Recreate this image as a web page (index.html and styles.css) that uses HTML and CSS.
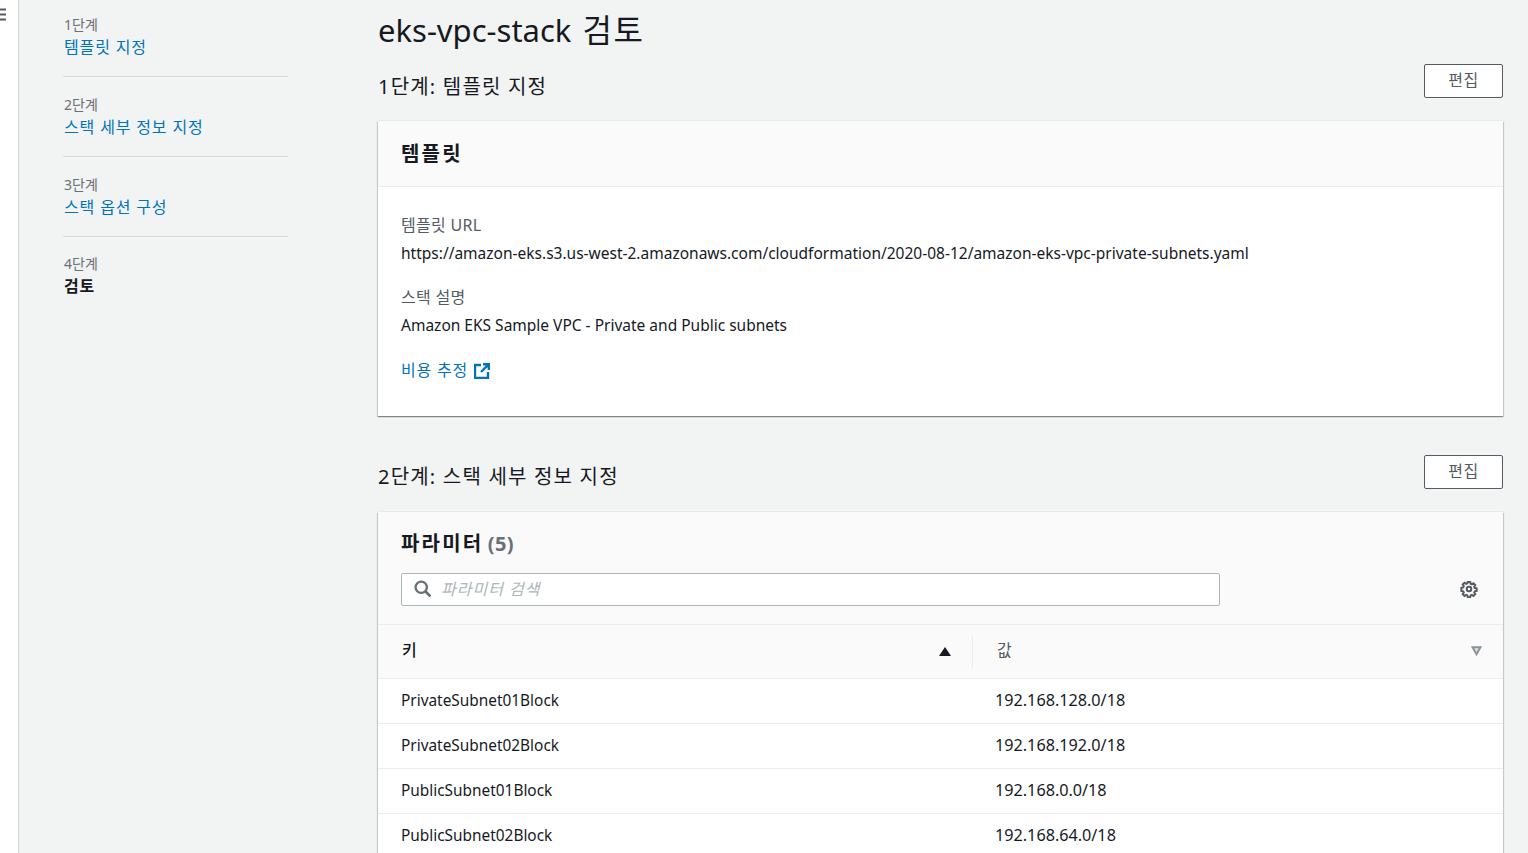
FILE: index.html
```html
<!DOCTYPE html>
<html lang="ko">
<head>
<meta charset="utf-8">
<title>eks-vpc-stack 검토</title>
<link rel="stylesheet" href="styles.css">
</head>
<body>
<div class="app">
  <aside class="strip">
    <svg class="menu-icon" width="6" height="14" viewBox="0 0 6 14"><path d="M0 1.5h6M0 6.5h6M0 11.5h6" stroke="#545b64" stroke-width="2" fill="none"/></svg>
  </aside>
  <nav class="steps">
    <div class="step">
      <div class="step-num">1단계</div>
      <a class="step-link">템플릿 지정</a>
    </div>
    <div class="step">
      <div class="step-num">2단계</div>
      <a class="step-link">스택 세부 정보 지정</a>
    </div>
    <div class="step">
      <div class="step-num">3단계</div>
      <a class="step-link">스택 옵션 구성</a>
    </div>
    <div class="step step-last">
      <div class="step-num">4단계</div>
      <span class="step-current">검토</span>
    </div>
  </nav>
  <main class="content">
    <h1 class="page-title">eks-vpc-stack <span class="title-ko">검토</span></h1>
    <section class="section section-first">
      <div class="section-head">
        <h2 class="section-title">1단계: 템플릿 지정</h2>
        <button class="btn">편집</button>
      </div>
      <div class="card">
        <div class="card-head"><h3 class="card-title">템플릿</h3></div>
        <div class="card-body">
          <div class="field">
            <div class="field-label">템플릿 URL</div>
            <div class="field-value">https://amazon-eks.s3.us-west-2.amazonaws.com/cloudformation/2020-08-12/amazon-eks-vpc-private-subnets.yaml</div>
          </div>
          <div class="field">
            <div class="field-label">스택 설명</div>
            <div class="field-value">Amazon EKS Sample VPC - Private and Public subnets</div>
          </div>
          <a class="ext-link">비용 추정
            <svg class="ext-icon" width="16" height="16" viewBox="0 0 16 16"><path d="M7 2H1v13h13V9" fill="none" stroke="#0073bb" stroke-width="2.4"/><path d="M9 1.2h5.8V7M14.8 1.2L7 9" fill="none" stroke="#0073bb" stroke-width="2.4"/></svg>
          </a>
        </div>
      </div>
    </section>
    <section class="section">
      <div class="section-head">
        <h2 class="section-title">2단계: 스택 세부 정보 지정</h2>
        <button class="btn">편집</button>
      </div>
      <div class="card card-open">
        <div class="card-head card-head-params">
          <h3 class="card-title card-title-params">파라미터 <span class="count">(5)</span></h3>
          <div class="tools">
            <div class="search">
              <svg class="search-icon" width="17" height="17" viewBox="0 0 16 16"><circle cx="6.8" cy="6.8" r="5.3" fill="none" stroke="#687078" stroke-width="2.2"/><path d="M10.6 10.6L15.5 15.5" stroke="#687078" stroke-width="2.6"/></svg>
              <span class="placeholder">파라미터 검색</span>
            </div>
            <svg class="gear" width="18" height="18" viewBox="0 0 18 18"><path d="M7.6 1.2h2.8l.4 2.1 1.4.6 1.8-1.2 2 2-1.2 1.8.6 1.4 2.1.4v2.8l-2.1.4-.6 1.4 1.2 1.8-2 2-1.8-1.2-1.4.6-.4 2.1H7.6l-.4-2.1-1.4-.6-1.8 1.2-2-2 1.2-1.8-.6-1.4-2.1-.4V7.6l2.1-.4.6-1.4-1.2-1.8 2-2 1.8 1.2 1.4-.6z" transform="translate(.9 .9) scale(.9)" fill="none" stroke="#545b64" stroke-width="2.2"/><circle cx="9" cy="9" r="2.3" fill="none" stroke="#545b64" stroke-width="2"/></svg>
          </div>
        </div>
        <div class="table-head">
          <div class="th th-key">
            <span class="th-text">키</span>
            <svg class="sort-icon" width="12" height="9" viewBox="0 0 12 9"><path d="M6 0l6 9H0z" fill="#16191f"/></svg>
          </div>
          <div class="th th-val">
            <span class="th-text">값</span>
            <svg class="sort-icon-down" width="11" height="10" viewBox="0 0 11 10"><path d="M1.5 1.2h8L5.5 8.2z" fill="#dfe3e3" stroke="#879596" stroke-width="2"/></svg>
          </div>
        </div>
        <div class="row"><div class="cell-key">PrivateSubnet01Block</div><div class="cell-val">192.168.128.0/18</div></div>
        <div class="row"><div class="cell-key">PrivateSubnet02Block</div><div class="cell-val">192.168.192.0/18</div></div>
        <div class="row"><div class="cell-key">PublicSubnet01Block</div><div class="cell-val">192.168.0.0/18</div></div>
        <div class="row"><div class="cell-key">PublicSubnet02Block</div><div class="cell-val">192.168.64.0/18</div></div>
      </div>
    </section>
  </main>
</div>
</body>
</html>
```
FILE: styles.css
```css
* { box-sizing: border-box; }
html, body { margin: 0; height: 100%; overflow: hidden; }
body {
  font-family: "Noto Sans", "Noto Sans CJK KR", sans-serif;
  font-size: 14px;
  line-height: 22px;
  color: #16191f;
  background: #f2f3f3;
}
.app { display: flex; height: 853px; overflow: hidden; align-items: flex-start; }
.strip {
  flex: 0 0 19px;
  height: 853px;
  background: #fff;
  border-right: 1px solid #d5dbdb;
  box-shadow: 1px 0 0 #e9ebed;
  padding-top: 8px;
}
.menu-icon { display: block; }
.steps { flex: 0 0 225px; margin-left: 44px; padding-top: 12px; }
.step { padding: 2px 0 18px; margin-bottom: 15px; border-bottom: 1px solid #d5dbdb; }
.step-last { border-bottom: 0; margin-top: -1px; }
.step-num { font-size: 14px; line-height: 22px; color: #687078; padding-left: 1px; }
.step-link { display: block; color: #0073bb; font-size: 16px; line-height: 22px; letter-spacing: .85px; padding-left: 1px; }
.step-current { display: block; font-weight: 700; font-size: 16px; line-height: 22px; letter-spacing: .9px; color: #16191f; padding-left: 1px; }
.content { flex: 0 0 1125px; margin-left: 90px; }
.page-title { margin: 9px 0 0; font-size: 31px; line-height: 42px; font-weight: 400; word-spacing: 3px; }
.title-ko { font-size: 32px; letter-spacing: 1.5px; }
.section-first { margin-top: 13px; }
.section { margin-bottom: 39px; }
.section-head { display: flex; justify-content: space-between; align-items: flex-end; height: 57px; padding-bottom: 23px; }
.section-title { margin: 0 0 -2px; font-size: 20px; line-height: 28px; font-weight: 400; letter-spacing: 1.2px; }
.section-first .section-title { margin-bottom: -3px; }
.btn {
  width: 79px;
  height: 34px;
  background: #fff;
  border: 1px solid #545b64;
  border-radius: 2px;
  font: 400 16px/20px "Noto Sans", "Noto Sans CJK KR", sans-serif;
  letter-spacing: .6px;
  color: #545b64;
  padding: 0 0 2px;
}
.card { background: #fff; box-shadow: 0 -1px 0 0 #e8eaea, 0 1px 1px 0 rgba(0,28,36,.3), 1px 1px 1px 0 rgba(0,28,36,.15), -1px 1px 1px 0 rgba(0,28,36,.15); }
.card-head { height: 66px; padding: 21px 23px 0; background: #fafafa; border-bottom: 1px solid #eaeded; }
.card-title { margin: 0; font-size: 20px; line-height: 24px; font-weight: 700; letter-spacing: 2.2px; word-spacing: -3px; }
.card-body { height: 229px; padding: 27px 23px 0; }
.field { margin-bottom: 22px; }
.field-label { color: #545b64; line-height: 22px; margin-bottom: 6px; font-size: 16px; letter-spacing: .3px; }
.field-value { line-height: 22px; font-size: 15.5px; }
.ext-link { display: flex; align-items: center; gap: 6px; color: #0073bb; font-size: 16px; line-height: 24px; letter-spacing: .8px; }
.ext-icon { display: block; margin-top: 2px; }
.card-head-params { height: 113px; padding-top: 20px; }
.card-title-params { line-height: 24px; }
.count { color: #687078; letter-spacing: .4px; }
.tools { display: flex; align-items: center; justify-content: space-between; margin-top: 17px; }
.search {
  width: 819px;
  height: 33px;
  display: flex;
  align-items: center;
  gap: 10px;
  padding: 0 0 2px 12px;
  background: #fff;
  border: 1px solid #aab7b8;
  border-radius: 2px;
}
.search-icon { display: block; flex: none; }
.placeholder { font-style: italic; color: #aab7b8; font-size: 16px; letter-spacing: 1px; }
.gear { display: block; margin: -1px 2px 0 0; }
.table-head { display: flex; height: 54px; background: #fafafa; border-bottom: 1px solid #eaeded; align-items: center; }
.th { display: flex; align-items: center; justify-content: space-between; font-weight: 400; font-size: 16px; height: 32px; }
.th-text { padding-bottom: 4px; }
.sort-icon { margin-bottom: 1px; }
.sort-icon-down { margin-bottom: 2px; }
.th-key { flex: 0 0 595px; padding: 0 21px 0 24px; border-right: 1px solid #eaeded; font-weight: 500; }
.th-val { flex: 1; padding: 0 21px 0 24px; color: #545b64; }
.row { display: flex; height: 45px; align-items: center; border-bottom: 1px solid #eaeded; font-size: 15.4px; }
.cell-key { flex: 0 0 594px; padding-left: 23px; }
.cell-val { flex: 1; padding: 0 0 2px 23px; font-size: 16.2px; }
```
